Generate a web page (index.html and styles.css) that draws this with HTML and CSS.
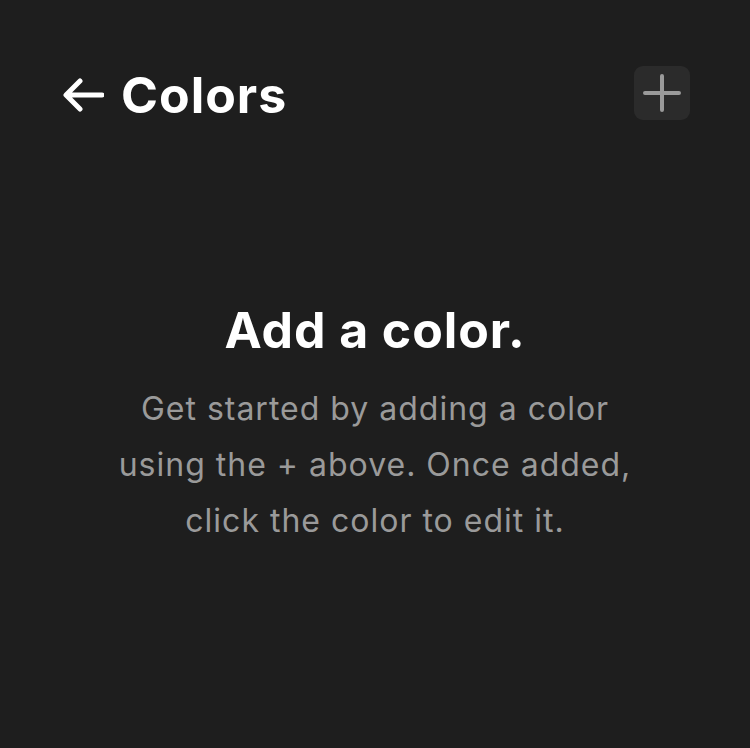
FILE: index.html
```html
<!DOCTYPE html>
<html lang="en">
<head>
<meta charset="utf-8">
<title>Colors</title>
<link rel="stylesheet" href="styles.css">
</head>
<body>
<div class="screen">
  <header class="topbar">
    <div class="title-group">
      <svg class="back-icon" width="42" height="34" viewBox="0 0 42 34" aria-hidden="true">
        <path d="M40 17 H5 M18 3 L4 17 L18 31" fill="none" stroke="#ffffff" stroke-width="5" stroke-linecap="round" stroke-linejoin="round"/>
      </svg>
      <h1 class="title">Colors</h1>
    </div>
    <button class="add-btn" aria-label="Add color">
      <svg width="38" height="38" viewBox="0 0 38 38" aria-hidden="true">
        <path d="M19 2 V36 M2 19 H36" fill="none" stroke="#9a9a9a" stroke-width="4" stroke-linecap="round"/>
      </svg>
    </button>
  </header>
  <main class="empty">
    <h2 class="empty-title">Add a color.</h2>
    <p class="empty-text">Get started by adding a color<br>using the + above. Once added,<br>click the color to edit it.</p>
  </main>
</div>
</body>
</html>
```

FILE: styles.css
```css
html, body {
  margin: 0;
  padding: 0;
  background: #1e1e1e;
}
body {
  font-family: Inter, "Liberation Sans", sans-serif;
  color: #ffffff;
}
.screen {
  width: 750px;
  height: 748px;
  box-sizing: border-box;
  padding: 66px 60px 0 62px;
}
.topbar {
  display: flex;
  align-items: center;
  justify-content: space-between;
  height: 54px;
}
.title-group {
  display: flex;
  align-items: center;
  gap: 17px;
  padding-top: 3px;
}
.back-icon {
  display: block;
}
.title {
  margin: 0;
  font-size: 50px;
  font-weight: 700;
  line-height: 54px;
  letter-spacing: 1px;
}
.add-btn {
  width: 56px;
  height: 54px;
  border: none;
  border-radius: 9px;
  background: #2b2b2b;
  padding: 0;
  display: flex;
  align-items: center;
  justify-content: center;
}
.add-btn svg {
  display: block;
}
.empty {
  margin-top: 180px;
  text-align: center;
  padding-right: 2px;
}
.empty-title {
  margin: 0;
  font-size: 50px;
  font-weight: 700;
  line-height: 60px;
  letter-spacing: 0.9px;
}
.empty-text {
  margin: 21px 0 0;
  font-size: 32px;
  line-height: 56px;
  letter-spacing: 1px;
  color: #9a9a9a;
}
```
